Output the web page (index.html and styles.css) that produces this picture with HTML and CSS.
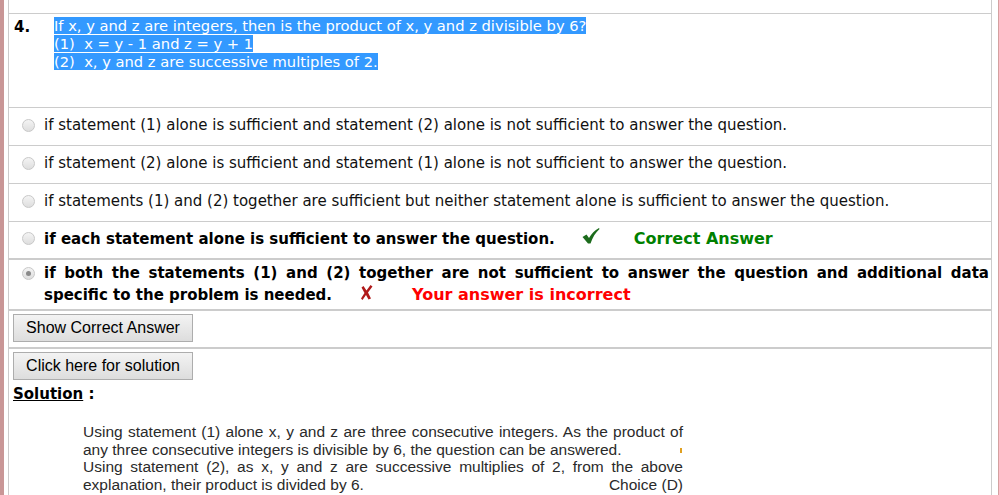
FILE: index.html
```html
<!DOCTYPE html>
<html>
<head>
<meta charset="utf-8">
<link rel="stylesheet" href="styles.css">
</head>
<body>
<div class="outer">
  <div class="frame">
    <div class="row top"></div>
    <div class="row question">
      <div class="qnum">4.</div>
      <div class="qtext">
        <span class="sel">If x, y and z are integers, then is the product of x, y and z divisible by 6? </span><br>
        <span class="sel">(1)&nbsp; x = y - 1 and z = y + 1 </span><br>
        <span class="sel">(2)&nbsp; x, y and z are successive multiples of 2.</span>
      </div>
    </div>
    <div class="row opt">
      <span class="radio"></span>
      <span class="otext">if statement (1) alone is sufficient and statement (2) alone is not sufficient to answer the question.</span>
    </div>
    <div class="row opt">
      <span class="radio"></span>
      <span class="otext">if statement (2) alone is sufficient and statement (1) alone is not sufficient to answer the question.</span>
    </div>
    <div class="row opt">
      <span class="radio"></span>
      <span class="otext">if statements (1) and (2) together are sufficient but neither statement alone is sufficient to answer the question.</span>
    </div>
    <div class="row opt thick">
      <span class="radio"></span>
      <span class="otext bold">if each statement alone is sufficient to answer the question.</span>
      <svg class="tick" width="18" height="16" viewBox="0 0 18 16"><path d="M0.5 9 L4.5 6.5 L7 10 C9.5 5.5 12.5 2.5 17 0 L17.5 1 C13.5 4.5 10.5 9.5 8.5 15.5 L6 15.5 Z" fill="#1c6b1c"/></svg>
      <span class="good">Correct Answer</span>
    </div>
    <div class="row opt2 thick">
      <span class="radio on"></span>
      <div class="otext bold just">if both the statements (1) and (2) together are not sufficient to answer the question and additional data specific to the problem is needed.<svg class="cross" width="14" height="16" viewBox="0 0 14 16"><path d="M3.5 1 L6.5 5.5 L10.5 0 L12.5 1.5 L8 7.5 L11 13.5 L8.5 14.5 L6 10 L2.5 15 L1 13.5 L4.5 8 L1.5 2.5 Z" fill="#b01a1a"/></svg><span class="bad">Your answer is incorrect</span></div>
    </div>
    <div class="row btnrow thick">
      <button class="btn">Show Correct Answer</button>
    </div>
    <div class="row last">
      <button class="btn">Click here for solution</button>
      <div class="soltitle"><u>Solution</u> :</div>
      <div class="solimg">
        <div class="ln j">Using statement (1) alone x, y and z are three consecutive integers. As the product of</div>
        <div class="ln">any three consecutive integers is divisible by 6, the question can be answered.<span class="speck"></span></div>
        <div class="ln j">Using statement (2), as x, y and z are successive multiplies of 2, from the above</div>
        <div class="ln split"><span>explanation, their product is divided by 6.</span><span>Choice (D)</span></div>
      </div>
    </div>
  </div>
</div>
</body>
</html>
```

FILE: styles.css
```css
html, body {
  margin: 0;
  padding: 0;
  background: #fff;
  height: 495px;
  overflow: hidden;
}
.outer {
  width: 999px;
  height: 495px;
  box-sizing: border-box;
  border-left: 4px solid #c99696;
  border-right: 1px solid #d4a0a0;
  padding-left: 4px;
  padding-right: 6px;
}
.frame {
  height: 100%;
  border-left: 1px solid #cccccc;
  border-right: 1px solid #cccccc;
  font-family: "DejaVu Sans", Verdana, sans-serif;
  color: #111;
}
.row {
  border-bottom: 1px solid #cccccc;
  box-sizing: border-box;
}
.row.thick {
  border-bottom: 2px solid #cccccc;
}
.top {
  height: 14px;
}
.question {
  height: 94px;
  display: flex;
  padding-top: 3px;
}
.qnum {
  width: 45px;
  padding-left: 5px;
  font-weight: bold;
  font-size: 15px;
  line-height: 20px;
  box-sizing: border-box;
  color: #000;
}
.qtext {
  font-size: 14.7px;
  line-height: 18px;
  padding-top: 0;
}
.sel {
  background: #3399ff;
  color: #fff;
}
.opt {
  height: 38px;
  display: flex;
  align-items: center;
  padding-left: 13px;
  padding-bottom: 3px;
}
.radio {
  width: 13px;
  height: 13px;
  border-radius: 50%;
  border: 1px solid #c8c8c8;
  background: linear-gradient(#f4f4f4, #dedede);
  box-sizing: border-box;
  flex: none;
  margin-right: 9px;
  position: relative;
}
.radio.on::after {
  content: "";
  position: absolute;
  left: 3px;
  top: 3px;
  width: 5px;
  height: 5px;
  border-radius: 50%;
  background: #8a8a8a;
}
.otext {
  font-size: 15px;
}
.bold {
  font-weight: bold;
  color: #000;
}
.tick {
  margin-left: 27px;
  margin-top: -6px;
  flex: none;
}
.good {
  margin-left: 34px;
  color: #008000;
  font-weight: bold;
  font-size: 16px;
}
.opt2 {
  height: 51px;
  display: flex;
  align-items: flex-start;
  padding-left: 13px;
  padding-top: 2px;
}
.opt2 .radio {
  margin-top: 5px;
}
.just {
  text-align: justify;
  line-height: 22px;
  flex: 1;
  padding-right: 2px;
}
.cross {
  margin-left: 28px;
  vertical-align: -1px;
}
.bad {
  margin-left: 38px;
  color: #ff0000;
  font-size: 16px;
}
.btnrow {
  height: 38px;
  padding: 3px 0 0 4px;
}
.btn {
  display: block;
  width: 180px;
  height: 28px;
  margin: 0;
  padding: 0;
  border: 1px solid #adadad;
  border-radius: 0;
  background: linear-gradient(#f3f3f3, #dddddd);
  font-family: "Liberation Sans", Arial, sans-serif;
  font-size: 16px;
  color: #000;
}
.last {
  border-bottom: none;
  padding: 3px 0 0 4px;
}
.soltitle {
  margin-top: 4px;
  font-weight: bold;
  font-size: 15px;
  line-height: 20px;
  color: #000;
}
.solimg {
  width: 600px;
  margin: 19px 0 0 70px;
  font-family: "Liberation Sans", Arial, sans-serif;
  font-size: 15.5px;
  line-height: 17.6px;
  color: #2a2a2a;
}
.ln {
  white-space: nowrap;
}
.ln.j {
  text-align: justify;
  text-align-last: justify;
}
.ln.split {
  display: flex;
  justify-content: space-between;
}
.speck {
  display: inline-block;
  width: 2px;
  height: 5px;
  background: #e0a020;
  margin-left: 58px;
  vertical-align: 2px;
}
```
